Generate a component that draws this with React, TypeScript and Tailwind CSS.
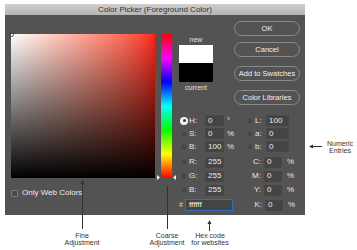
import React from "react";

const ui = "font-['Liberation_Sans',Arial,sans-serif]";

function Radio({ on }: { on?: boolean }) {
  if (on) {
    return (
      <span className="flex h-[8px] w-[8px] items-center justify-center rounded-full bg-[#f2f2f2]">
        <span className="block h-[3px] w-[3px] rounded-full bg-[#3c3c3c]" />
      </span>
    );
  }
  return <span className="block h-[8px] w-[8px] rounded-full border border-[#5c5c5c] bg-[#474747]" />;
}

function Field({ value, w }: { value: string; w: string }) {
  return (
    <span className={`flex h-[11px] items-center border border-[#474747] bg-[#444444] pl-[2px] text-[8px] leading-none text-[#ececec] ${w}`}>
      {value}
    </span>
  );
}

function LabRow({
  on,
  label,
  value,
  unit,
  r,
  rv,
}: {
  on?: boolean;
  label: string;
  value: string;
  unit: string;
  r: string;
  rv: string;
}) {
  return (
    <div className="flex h-[13px] items-center">
      <span className="ml-[1px] w-[9px]">
        <Radio on={on} />
      </span>
      <span className="w-[16px] text-[8px] text-[#e6e6e6]">{label}</span>
      <Field value={value} w="w-[19px]" />
      <span className="w-[22px] pl-[3px] text-[8px] text-[#e6e6e6]">{unit}</span>
      <span className="w-[8px]">
        <Radio />
      </span>
      <span className="w-[12px] pl-[1px] text-[8px] text-[#e6e6e6]">{r}</span>
      <Field value={rv} w="w-[23px]" />
    </div>
  );
}

function RgbRow({ label, value, c }: { label: string; value: string; c: string }) {
  return (
    <div className="flex h-[14px] items-center">
      <span className="ml-[1px] w-[9px]">
        <Radio />
      </span>
      <span className="w-[16px] text-[8px] text-[#e6e6e6]">{label}</span>
      <Field value={value} w="w-[19px]" />
      <span className="w-[40px] pr-[3px] text-right text-[8px] text-[#e6e6e6]">{c}</span>
      <Field value="0" w="w-[18px]" />
      <span className="pl-[5px] text-[8px] text-[#e6e6e6]">%</span>
    </div>
  );
}

function Btn({ children, mt }: { children: React.ReactNode; mt: string }) {
  return (
    <div
      className={`flex h-[15px] w-[66px] items-center justify-center rounded-full border border-[#8a8a8a] text-[7.5px] text-[#f0f0f0] ${mt}`}
    >
      {children}
    </div>
  );
}

export default function App() {
  return (
    <div className={`relative h-[250px] w-[357px] overflow-hidden bg-white ${ui}`}>
      <div className="ml-[5px] mt-[4px] flex h-[211px] w-[300px] flex-col bg-[#535353]">
        {/* title bar */}
        <div className="flex h-[11px] items-center justify-center bg-gradient-to-b from-[#cfcfcf] to-[#b4b4b4] text-[8px] leading-none text-[#333]">
          Color Picker (Foreground Color)
        </div>

        <div className="flex flex-1 pl-[6px]">
          {/* colour field */}
          <div className="flex w-[144px] flex-col pt-[19px]">
            <div className="relative h-[144px] w-[144px] bg-gradient-to-r from-white to-[#ff2418]">
              <div className="absolute inset-0 bg-gradient-to-t from-black to-transparent" />
              <span className="absolute -left-[2px] -top-[2px] block h-[5px] w-[5px] rounded-full border border-[#444]" />
            </div>
            <div className="mt-[9px] flex items-center gap-[4px]">
              <span className="block h-[7px] w-[7px] rounded-[1px] border border-[#7a7a7a] bg-[#4a4a4a]" />
              <span className="text-[8px] text-[#ececec]">Only Web Colors</span>
            </div>
          </div>

          {/* hue strip */}
          <div className="ml-[6px] pt-[19px]">
            <div className="relative h-[144px] w-[11px] bg-[linear-gradient(to_bottom,#ff0000,#ff00ff,#0000ff,#00ffff,#00ff00,#ffff00,#ff0000)]">
              <svg className="absolute -left-[4px] bottom-[-2px]" width="3" height="5" viewBox="0 0 3 5">
                <path d="M0 0 L3 2.5 L0 5 Z" fill="#f2f2f2" />
              </svg>
              <svg className="absolute -right-[4px] bottom-[-2px]" width="3" height="5" viewBox="0 0 3 5">
                <path d="M3 0 L0 2.5 L3 5 Z" fill="#f2f2f2" />
              </svg>
            </div>
          </div>

          {/* right area */}
          <div className="ml-[7px] flex w-[121px] flex-col pt-[6px]">
            <div className="flex h-[93px]">
              <div className="flex w-[34px] flex-col items-center pt-[14px]">
                <span className="text-[7px] leading-[10px] text-[#e0e0e0]">new</span>
                <div className="h-[18px] w-[34px] bg-white" />
                <div className="h-[19px] w-[34px] bg-black" />
                <span className="mt-[1px] text-[7px] leading-[10px] text-[#e0e0e0]">current</span>
              </div>
              <div className="ml-auto flex flex-col">
                <Btn mt="">OK</Btn>
                <Btn mt="mt-[6px]">Cancel</Btn>
                <Btn mt="mt-[9px]">Add to Swatches</Btn>
                <Btn mt="mt-[9px]">Color Libraries</Btn>
              </div>
            </div>

            <div className="flex flex-col">
              <LabRow on label="H:" value="0" unit="°" r="L:" rv="100" />
              <LabRow label="S:" value="0" unit="%" r="a:" rv="0" />
              <LabRow label="B:" value="100" unit="%" r="b:" rv="0" />
              <div className="mt-[2px]" />
              <RgbRow label="R:" value="255" c="C:" />
              <RgbRow label="G:" value="255" c="M:" />
              <RgbRow label="B:" value="255" c="Y:" />
              <div className="mt-[1px] flex h-[14px] items-center">
                <span className="w-[6px] text-[7px] text-[#cfcfcf]">#</span>
                <span className="flex h-[12px] w-[48px] items-center border border-[#2f6fbf] bg-[#444] pl-[3px] text-[8px] text-[#f2f2f2]">
                  ffffff
                </span>
                <span className="w-[32px] pr-[3px] text-right text-[8px] text-[#e6e6e6]">K:</span>
                <Field value="0" w="w-[18px]" />
                <span className="pl-[5px] text-[8px] text-[#e6e6e6]">%</span>
              </div>
            </div>
          </div>
        </div>
      </div>

      {/* callouts */}
      <svg className="absolute left-0 top-0" width="357" height="250">
        <g stroke="#333" strokeWidth="1" fill="none">
          <line x1="82.5" y1="183" x2="82.5" y2="229" />
          <line x1="167.5" y1="186" x2="167.5" y2="229" />
          <line x1="209.5" y1="223" x2="209.5" y2="231" />
          <line x1="312" y1="146.5" x2="322" y2="146.5" />
        </g>
        <g fill="#333">
          <path d="M80.5 184 L82.5 180 L84.5 184 Z" />
          <path d="M207.5 224 L209.5 220 L211.5 224 Z" />
          <path d="M313 144.5 L309 146.5 L313 148.5 Z" />
        </g>
      </svg>
      <div className="absolute left-[312px] top-[140px] w-[56px] text-center text-[7px] leading-[7px] text-[#333]">
        Numeric
        <br />
        Entries
      </div>
      <div className="absolute left-[52px] top-[232px] w-[60px] text-center text-[7px] leading-[7px] text-[#333]">
        Fine
        <br />
        Adjustment
      </div>
      <div className="absolute left-[137px] top-[232px] w-[60px] text-center text-[7px] leading-[7px] text-[#333]">
        Coarse
        <br />
        Adjustment
      </div>
      <div className="absolute left-[180px] top-[232px] w-[60px] text-center text-[7px] leading-[7px] text-[#333]">
        Hex code
        <br />
        for websites
      </div>
    </div>
  );
}
